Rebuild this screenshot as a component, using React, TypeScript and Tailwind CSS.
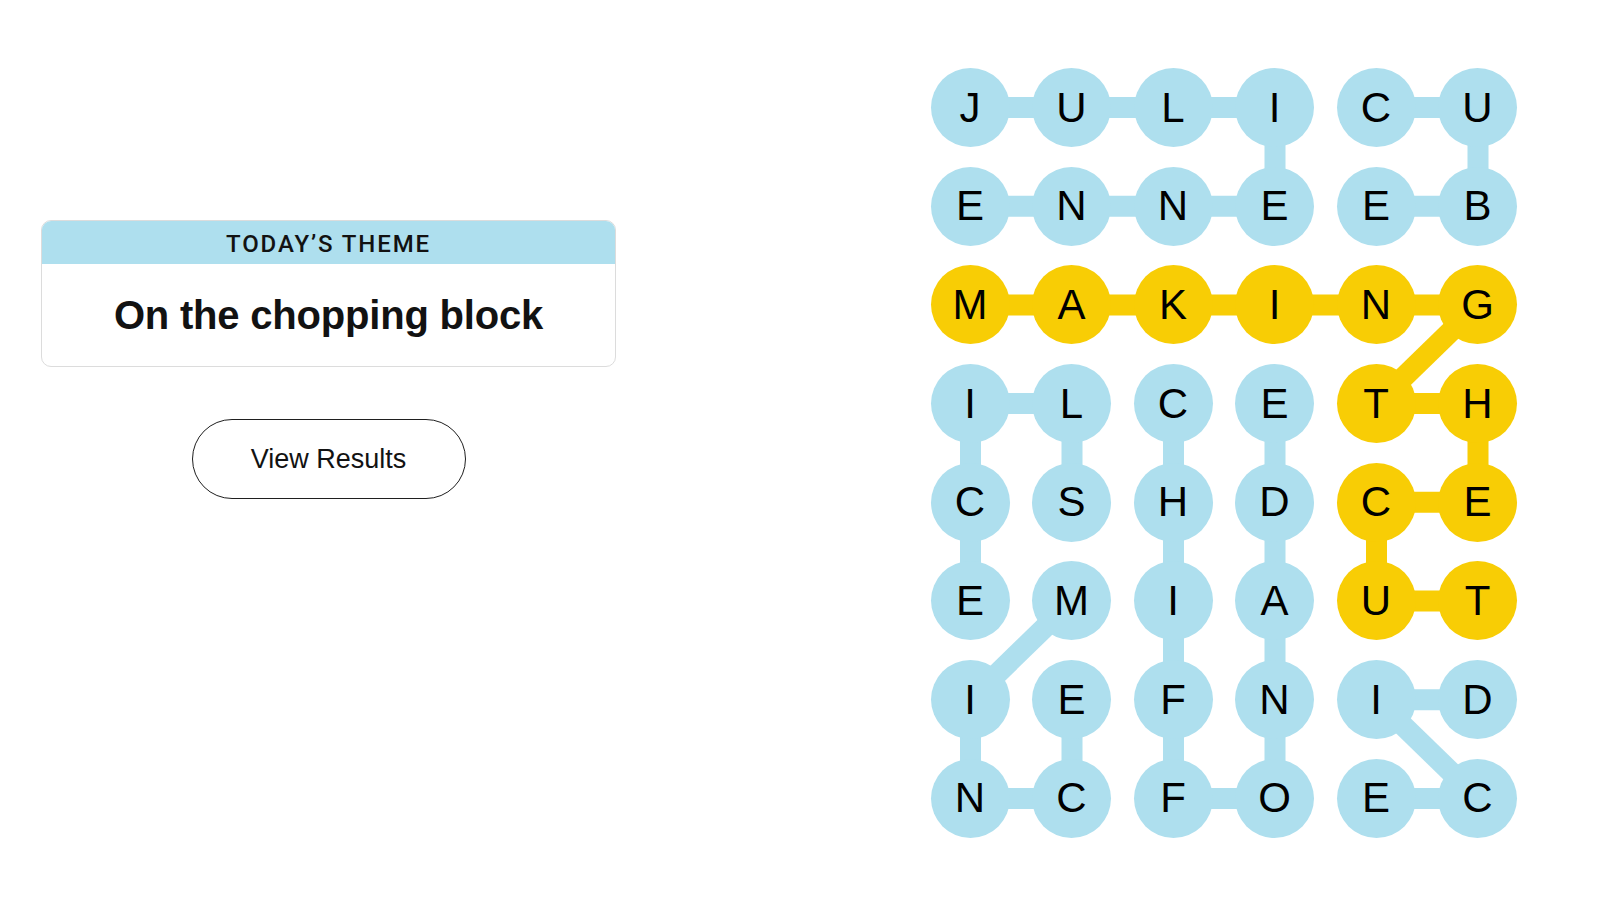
import React from "react";

const GRID = [
  "JULICU",
  "ENNEEB",
  "MAKING",
  "ILCETH",
  "CSHDCE",
  "EMIAUT",
  "IEFNID",
  "NCFOEC",
];

const YELLOW = new Set([
  "2,0", "2,1", "2,2", "2,3", "2,4", "2,5",
  "3,4", "3,5", "4,4", "4,5", "5,4", "5,5",
]);

type Seg = [number, number, number, number];

const BLUE_SEGS: Seg[] = [
  // JULIENNE
  [0, 0, 0, 1], [0, 1, 0, 2], [0, 2, 0, 3], [0, 3, 1, 3], [1, 3, 1, 2], [1, 2, 1, 1], [1, 1, 1, 0],
  // CUBE
  [0, 4, 0, 5], [0, 5, 1, 5], [1, 5, 1, 4],
  // SLICE
  [4, 1, 3, 1], [3, 1, 3, 0], [3, 0, 4, 0], [4, 0, 5, 0],
  // MINCE
  [5, 1, 6, 0], [6, 0, 7, 0], [7, 0, 7, 1], [7, 1, 6, 1],
  // CHIFFONADE
  [3, 2, 4, 2], [4, 2, 5, 2], [5, 2, 6, 2], [6, 2, 7, 2], [7, 2, 7, 3], [7, 3, 6, 3], [6, 3, 5, 3], [5, 3, 4, 3], [4, 3, 3, 3],
  // DICE
  [6, 5, 6, 4], [6, 4, 7, 5], [7, 5, 7, 4],
];

const YELLOW_SEGS: Seg[] = [
  [2, 0, 2, 1], [2, 1, 2, 2], [2, 2, 2, 3], [2, 3, 2, 4], [2, 4, 2, 5],
  [2, 5, 3, 4], [3, 4, 3, 5], [3, 5, 4, 5], [4, 5, 4, 4], [4, 4, 5, 4], [5, 4, 5, 5],
];

const D = 79;
const GX = 22.5;
const GY = 19.7;
const cx = (c: number) => D / 2 + c * (D + GX);
const cy = (r: number) => D / 2 + r * (D + GY);

export default function App() {
  const W = 6 * D + 5 * GX;
  const H = 8 * D + 7 * GY;
  return (
    <div
      className="w-[1600px] h-[900px] bg-white flex overflow-hidden"
      style={{ fontFamily: '"Liberation Sans", Arial, sans-serif' }}
    >
      <div className="ml-[41px] mt-[220px] w-[575px] flex flex-col items-center">
        <div className="w-full h-[147px] rounded-[10px] border border-[#dcdcdc] overflow-hidden flex flex-col bg-white">
          <div className="h-[43px] bg-[#aedfee] flex items-center justify-center">
            <span className="text-[24px] font-medium tracking-[1.9px] text-[#121212] leading-none pt-[2px] font-['Roboto',_'Liberation_Sans',_sans-serif]">
              TODAY’S THEME
            </span>
          </div>
          <div className="flex-1 flex items-center justify-center">
            <span className="text-[40px] font-bold text-[#121212] leading-none tracking-[-0.2px]">
              On the chopping block
            </span>
          </div>
        </div>
        <button className="mt-[52px] w-[274px] h-[80px] rounded-full border border-[#1f1f1f] bg-white flex items-center justify-center text-[27px] text-[#121212]">
          View Results
        </button>
      </div>

      <div className="ml-auto mr-[83px] mt-[68px] relative" style={{ width: W, height: H }}>
        <svg className="absolute inset-0" width={W} height={H}>
          {BLUE_SEGS.map(([r1, c1, r2, c2], i) => (
            <line
              key={"b" + i}
              x1={cx(c1)}
              y1={cy(r1)}
              x2={cx(c2)}
              y2={cy(r2)}
              stroke="#aedfee"
              strokeWidth={21}
            />
          ))}
          {YELLOW_SEGS.map(([r1, c1, r2, c2], i) => (
            <line
              key={"y" + i}
              x1={cx(c1)}
              y1={cy(r1)}
              x2={cx(c2)}
              y2={cy(r2)}
              stroke="#f8cd05"
              strokeWidth={21}
            />
          ))}
        </svg>
        <div className="relative grid grid-cols-[repeat(6,79px)] gap-x-[22.5px] gap-y-[19.7px]">
          {GRID.flatMap((row, r) =>
            row.split("").map((ch, c) => (
              <div
                key={r + "-" + c}
                className={
                  "w-[79px] h-[79px] rounded-full flex items-center justify-center text-[42px] leading-none text-black " +
                  (YELLOW.has(r + "," + c) ? "bg-[#f8cd05]" : "bg-[#aedfee]")
                }
              >
                {ch}
              </div>
            ))
          )}
        </div>
      </div>
    </div>
  );
}
